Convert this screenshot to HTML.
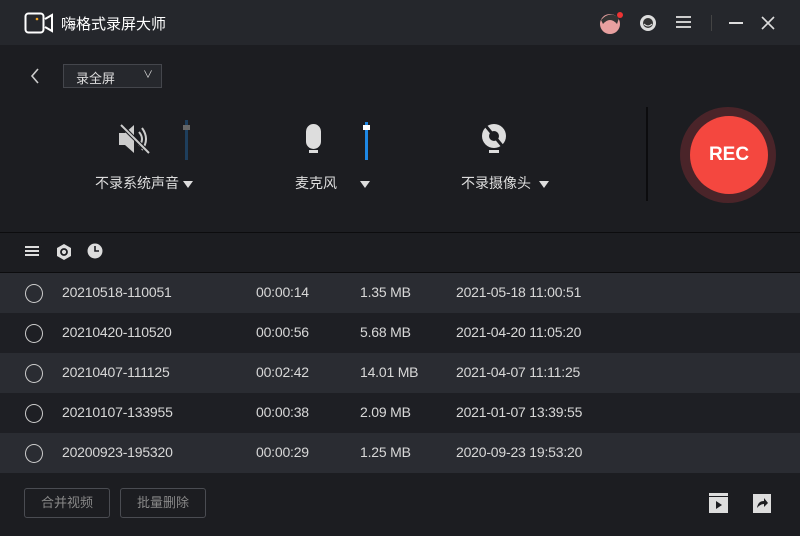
<!DOCTYPE html>
<html><head><meta charset="utf-8"><style>
*{margin:0;padding:0;box-sizing:border-box}
body{width:800px;height:536px;background:#1c1d21;font-family:"Liberation Sans","Noto Sans CJK SC",sans-serif;color:#ddd;position:relative;overflow:hidden}
.abs{position:absolute}
.title{left:0;top:0;width:800px;height:45px;background:#25272c}
.row{left:0;width:800px;height:40px;font-size:14px;color:#d8d8d8;letter-spacing:-0.2px}
.row span{position:absolute;top:11px}
.row .c{left:25px;top:11px;width:18px;height:19px;border:1.5px solid #ccc;border-radius:50%}
.btn{top:488px;height:30px;border:1px solid #4a4c52;border-radius:3px;font-size:13px;color:#888;text-align:center;line-height:28px}
.lbl{font-size:14px;color:#ddd;top:173px}
.tri{display:inline-block;width:0;height:0;border-left:5px solid transparent;border-right:5px solid transparent;border-top:7px solid #ddd;vertical-align:middle}
</style></head><body>
<div class="abs title"></div>
<svg class="abs" style="left:24px;top:12px" width="30" height="22" viewBox="0 0 30 22"><rect x="1.5" y="1.5" width="18" height="19" rx="3" fill="none" stroke="#fff" stroke-width="2"/><path d="M21 7 L28 3 V19 L21 15" fill="none" stroke="#fff" stroke-width="2"/><circle cx="13" cy="7" r="1.3" fill="#f5a623"/></svg>
<div class="abs" style="left:61px;top:13px;font-size:15px;color:#fff">嗨格式录屏大师</div>
<svg class="abs" style="left:597px;top:10px" width="30" height="26"><circle cx="13" cy="14" r="10" fill="#e8a0a0"/><path d="M4 10 Q13 0 22 8 L20 14 Q13 6 6 14Z" fill="#333"/><circle cx="23" cy="5" r="3" fill="#e33"/></svg>
<svg class="abs" style="left:636px;top:11px" width="24" height="24"><circle cx="12" cy="12" r="8" fill="#ddd"/><circle cx="12" cy="12" r="5" fill="#333"/><path d="M8 13 Q12 17 16 13" stroke="#ddd" fill="none"/></svg>
<div class="abs" style="left:676px;top:16px;width:15px;height:2px;background:#ccc;box-shadow:0 5px 0 #ccc,0 10px 0 #ccc"></div>
<div class="abs" style="left:711px;top:15px;width:1px;height:16px;background:#444"></div>
<div class="abs" style="left:729px;top:22px;width:14px;height:2px;background:#ddd"></div>
<svg class="abs" style="left:760px;top:15px" width="16" height="16"><path d="M2 2 L14 14 M14 2 L2 14" stroke="#ddd" stroke-width="1.6"/></svg>
<svg class="abs" style="left:29px;top:67px" width="12" height="18"><path d="M9 2 L3 9 L9 16" stroke="#ccc" stroke-width="1.6" fill="none"/></svg>
<div class="abs" style="left:63px;top:64px;width:99px;height:24px;border:1px solid #44464c;background:#26282d;font-size:13px;padding:3px 0 0 12px;color:#ddd">录全屏<span style="position:absolute;right:8px;top:1px;font-size:10px">∨</span></div>
<svg class="abs" style="left:117px;top:122px" width="36" height="34"><path d="M2 11 H8 L17 3 V31 L8 23 H2Z" fill="#ccc"/><path d="M22 10 Q28 17 22 24 M25 6 Q33 17 25 28" stroke="#ccc" stroke-width="2" fill="none"/><path d="M4 3 L32 31" stroke="#1c1d21" stroke-width="4"/><path d="M4 3 L32 31" stroke="#ccc" stroke-width="2"/></svg>
<div class="abs" style="left:185px;top:120px;width:3px;height:40px;background:#1e3e5c"></div>
<div class="abs" style="left:183px;top:125px;width:7px;height:5px;background:#666"></div>
<svg class="abs" style="left:303px;top:122px" width="22" height="34"><rect x="3" y="2" width="15" height="25" rx="7.5" fill="#ddd"/><rect x="6" y="28" width="9" height="3" fill="#ddd"/></svg>
<div class="abs" style="left:365px;top:122px;width:3px;height:38px;background:#1e88e5"></div>
<div class="abs" style="left:363px;top:125px;width:7px;height:5px;background:#fff"></div>
<svg class="abs" style="left:480px;top:122px" width="30" height="34"><circle cx="14" cy="14" r="12" fill="#ddd"/><circle cx="14" cy="14" r="5" fill="#1c1d21"/><path d="M5 3 L24 26" stroke="#1c1d21" stroke-width="3"/><rect x="9" y="28" width="10" height="3" fill="#ddd"/></svg>
<div class="abs lbl" style="left:95px">不录系统声音 <span class="tri"></span></div>
<div class="abs lbl" style="left:295px">麦克风 &nbsp; &nbsp; &nbsp;<span class="tri"></span></div>
<div class="abs lbl" style="left:461px">不录摄像头 &nbsp;<span class="tri"></span></div>
<div class="abs" style="left:646px;top:107px;width:2px;height:94px;background:#0c0c0e"></div>
<div class="abs" style="left:680px;top:107px;width:96px;height:96px;border-radius:50%;background:#4a2429"></div>
<div class="abs" style="left:690px;top:116px;width:78px;height:78px;border-radius:50%;background:#f4473f;color:#fff;font-size:19px;font-weight:bold;text-align:center;line-height:78px">REC</div>
<div class="abs" style="left:0;top:232px;width:800px;height:1px;background:#0c0c0e"></div>
<div class="abs" style="left:0;top:272px;width:800px;height:1px;background:#0c0c0e"></div>
<div class="abs" style="left:25px;top:246px;width:14px;height:2px;background:#ddd;box-shadow:0 4px 0 #ddd,0 8px 0 #ddd"></div>
<svg class="abs" style="left:56px;top:243px" width="16" height="18"><path d="M8 1 L15 5 V13 L8 17 L1 13 V5Z" fill="#ddd"/><circle cx="8" cy="9" r="3" fill="none" stroke="#1c1d21" stroke-width="1.8"/></svg>
<svg class="abs" style="left:87px;top:243px" width="16" height="16"><circle cx="8" cy="8" r="7.5" fill="#ddd"/><path d="M8 3 V8 H12" stroke="#1c1d21" stroke-width="1.6" fill="none"/></svg>
<div class="abs row" style="top:273px;background:#2a2c32"><div class="c abs"></div><span style="left:62px">20210518-110051</span><span style="left:256px">00:00:14</span><span style="left:360px">1.35 MB</span><span style="left:456px">2021-05-18 11:00:51</span></div>
<div class="abs row" style="top:313px;background:#1e1f24"><div class="c abs"></div><span style="left:62px">20210420-110520</span><span style="left:256px">00:00:56</span><span style="left:360px">5.68 MB</span><span style="left:456px">2021-04-20 11:05:20</span></div>
<div class="abs row" style="top:353px;background:#2a2c32"><div class="c abs"></div><span style="left:62px">20210407-111125</span><span style="left:256px">00:02:42</span><span style="left:360px">14.01 MB</span><span style="left:456px">2021-04-07 11:11:25</span></div>
<div class="abs row" style="top:393px;background:#1e1f24"><div class="c abs"></div><span style="left:62px">20210107-133955</span><span style="left:256px">00:00:38</span><span style="left:360px">2.09 MB</span><span style="left:456px">2021-01-07 13:39:55</span></div>
<div class="abs row" style="top:433px;background:#2a2c32"><div class="c abs"></div><span style="left:62px">20200923-195320</span><span style="left:256px">00:00:29</span><span style="left:360px">1.25 MB</span><span style="left:456px">2020-09-23 19:53:20</span></div>
<div class="abs btn" style="left:24px;width:86px">合并视频</div>
<div class="abs btn" style="left:120px;width:86px">批量删除</div>
<svg class="abs" style="left:708px;top:492px" width="22" height="22"><rect x="1" y="5" width="19" height="16" fill="#ddd"/><path d="M1 1 H20 V4 H1Z" fill="#ddd"/><path d="M8 9 L14 13 L8 17Z" fill="#1c1d21"/></svg>
<svg class="abs" style="left:752px;top:492px" width="20" height="22"><rect x="1" y="2" width="18" height="19" fill="#ddd"/><path d="M5 16 Q6 9 12 9 V6 L16 11 L12 15 V12 Q8 12 5 16Z" fill="#1c1d21"/></svg>
</body></html>
